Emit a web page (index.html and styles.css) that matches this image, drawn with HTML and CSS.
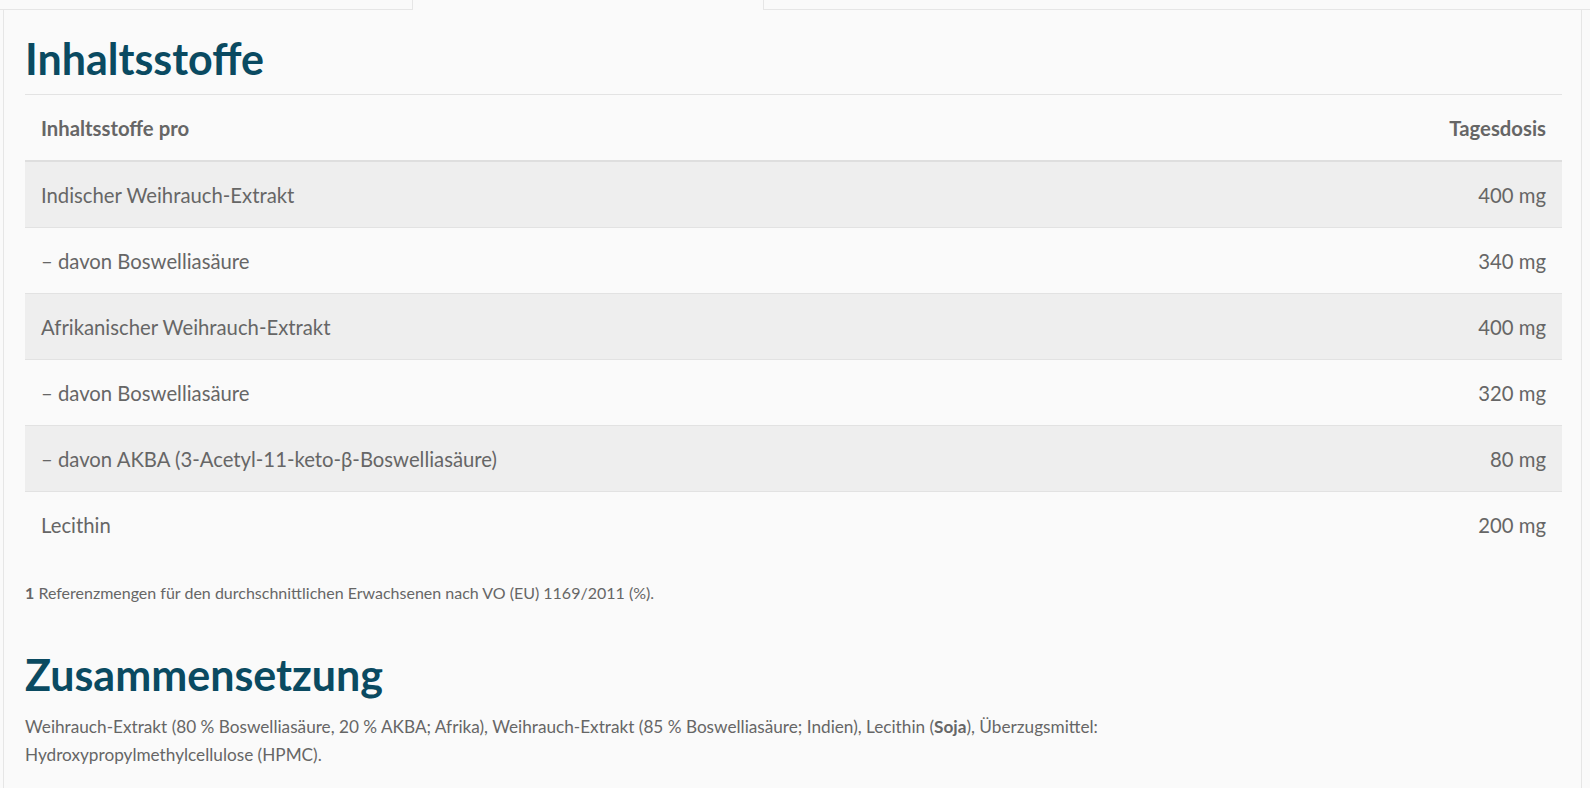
FILE: index.html
```html
<!DOCTYPE html>
<html lang="de">
<head>
<meta charset="UTF-8" />
<meta name="viewport" content="width=device-width, initial-scale=1" />
<title>Inhaltsstoffe</title>
<link rel="stylesheet" href="styles.css">
</head>
<body>

<div class="tabs">
  <div class="tab active"></div>
</div>

<div class="panel">
  <h2 class="section-title first">Inhaltsstoffe</h2>

  <table class="ingredients">
    <thead>
      <tr>
        <th>Inhaltsstoffe pro</th>
        <th class="dose">Tagesdosis</th>
      </tr>
    </thead>
    <tbody>
      <tr><td>Indischer Weihrauch-Extrakt</td><td class="dose">400 mg</td></tr>
      <tr><td>– davon Boswelliasäure</td><td class="dose">340 mg</td></tr>
      <tr><td>Afrikanischer Weihrauch-Extrakt</td><td class="dose">400 mg</td></tr>
      <tr><td>– davon Boswelliasäure</td><td class="dose">320 mg</td></tr>
      <tr><td>– davon AKBA (3-Acetyl-11-keto-β-Boswelliasäure)</td><td class="dose">80 mg</td></tr>
      <tr><td>Lecithin</td><td class="dose">200 mg</td></tr>
    </tbody>
  </table>

  <p class="footnote"><strong>1</strong> Referenzmengen für den durchschnittlichen Erwachsenen nach VO (EU) 1169/2011 (%).</p>

  <h2 class="section-title">Zusammensetzung</h2>
  <p class="composition">Weihrauch-Extrakt (80 % Boswelliasäure, 20 % AKBA; Afrika), Weihrauch-Extrakt (85 % Boswelliasäure; Indien), Lecithin (<strong>Soja</strong>), Überzugsmittel: Hydroxypropylmethylcellulose (HPMC).</p>
</div>

</body>
</html>
```

FILE: styles.css
```css
body { margin: 0; background: #fafafa; color: #666; font-family: Lato, "Open Sans", sans-serif; }

.tabs {
  display: flex; height: 9px; padding-left: 412px;
  border-bottom: 1px solid #e6e6e6;
}
.tab.active {
  width: 350px; margin-bottom: -1px;
  background: #fafafa; border: 1px solid #e6e6e6; border-top: none; border-bottom: none;
}

.panel {
  margin: 0 8px 0 3px; padding: 0 19px 40px 21px;
  border-left: 1px solid #e6e6e6; border-right: 1px solid #e6e6e6;
}

.section-title {
  margin: 0; color: #0a4a61; font-size: 43px; font-weight: 700; line-height: 50px;
}
.section-title.first {
  padding: 24px 0 10px; border-bottom: 1px solid #e3e3e3;
}

table.ingredients {
  width: 100%; border-collapse: collapse; font-size: 20.3px;
}
table.ingredients th, table.ingredients td {
  height: 65px; padding: 0 16px; text-align: left; color: #666;
}
table.ingredients th {
  font-weight: 700; border-bottom: 2px solid #dedede;
}
table.ingredients td { border-bottom: 1px solid #e2e2e2; }
table.ingredients tbody tr:nth-child(odd) td { background: #eeeeee; }
table.ingredients tbody tr:last-child td { border-bottom: none; }
table.ingredients .dose { text-align: right; }

.footnote { margin: 26px 0 48px; font-size: 16px; }
.footnote strong { font-weight: 700; }

.composition {
  margin: 13px 0 0; max-width: 1080px; font-size: 17.2px; line-height: 28px;
}
.composition strong { font-weight: 700; }
```
